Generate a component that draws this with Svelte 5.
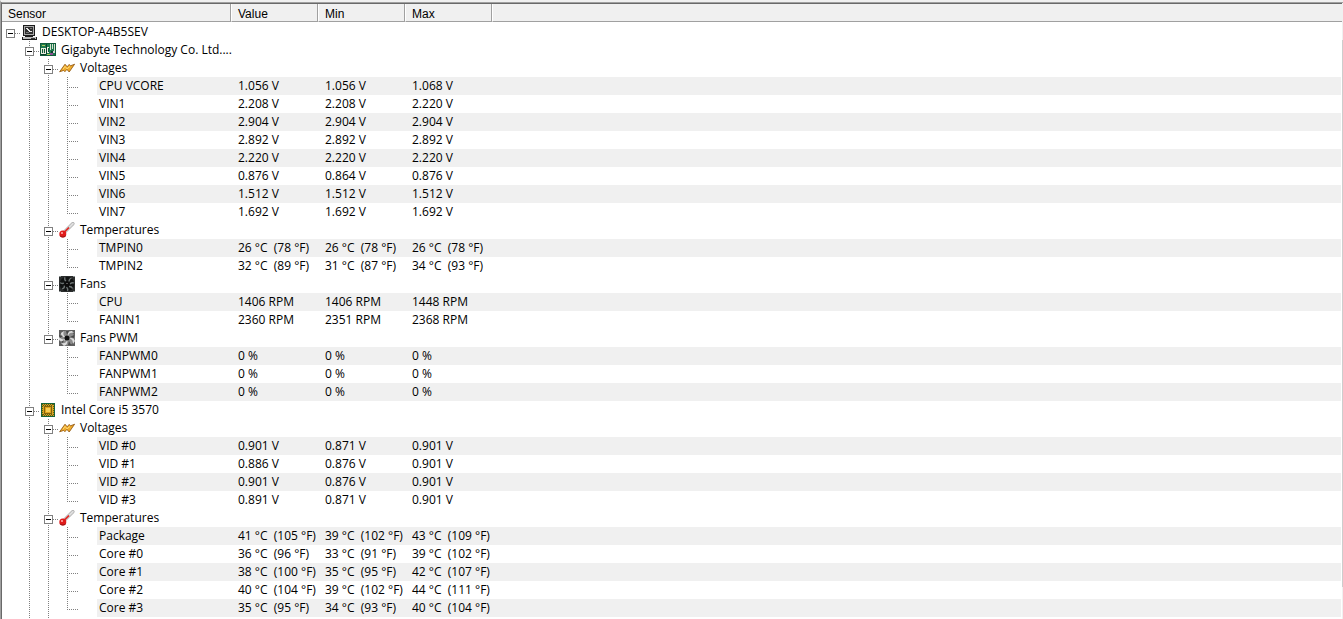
<script lang="ts">
  type Kind = "pc" | "board" | "chip" | "volt" | "temp" | "fan" | "pwm";
  type Reading = [name: string, value: string, min: string, max: string];
  type Group = { name: string; icon: Kind; readings: Reading[] };
  type Device = { name: string; icon: Kind; more: boolean; groups: Group[] };

  const columns = ["Value", "Min", "Max"];
  const host = "DESKTOP-A4B5SEV";

  // more: further groups follow below the visible part
  const devices: Device[] = [
    {
      name: "Gigabyte Technology Co. Ltd....",
      icon: "board",
      more: false,
      groups: [
        {
          name: "Voltages",
          icon: "volt",
          readings: [
            ["CPU VCORE", "1.056 V", "1.056 V", "1.068 V"],
            ["VIN1", "2.208 V", "2.208 V", "2.220 V"],
            ["VIN2", "2.904 V", "2.904 V", "2.904 V"],
            ["VIN3", "2.892 V", "2.892 V", "2.892 V"],
            ["VIN4", "2.220 V", "2.220 V", "2.220 V"],
            ["VIN5", "0.876 V", "0.864 V", "0.876 V"],
            ["VIN6", "1.512 V", "1.512 V", "1.512 V"],
            ["VIN7", "1.692 V", "1.692 V", "1.692 V"],
          ],
        },
        {
          name: "Temperatures",
          icon: "temp",
          readings: [
            ["TMPIN0", "26 °C  (78 °F)", "26 °C  (78 °F)", "26 °C  (78 °F)"],
            ["TMPIN2", "32 °C  (89 °F)", "31 °C  (87 °F)", "34 °C  (93 °F)"],
          ],
        },
        {
          name: "Fans",
          icon: "fan",
          readings: [
            ["CPU", "1406 RPM", "1406 RPM", "1448 RPM"],
            ["FANIN1", "2360 RPM", "2351 RPM", "2368 RPM"],
          ],
        },
        {
          name: "Fans PWM",
          icon: "pwm",
          readings: [
            ["FANPWM0", "0 %", "0 %", "0 %"],
            ["FANPWM1", "0 %", "0 %", "0 %"],
            ["FANPWM2", "0 %", "0 %", "0 %"],
          ],
        },
      ],
    },
    {
      name: "Intel Core i5 3570",
      icon: "chip",
      more: true,
      groups: [
        {
          name: "Voltages",
          icon: "volt",
          readings: [
            ["VID #0", "0.901 V", "0.871 V", "0.901 V"],
            ["VID #1", "0.886 V", "0.876 V", "0.901 V"],
            ["VID #2", "0.901 V", "0.876 V", "0.901 V"],
            ["VID #3", "0.891 V", "0.871 V", "0.901 V"],
          ],
        },
        {
          name: "Temperatures",
          icon: "temp",
          readings: [
            ["Package", "41 °C  (105 °F)", "39 °C  (102 °F)", "43 °C  (109 °F)"],
            ["Core #0", "36 °C  (96 °F)", "33 °C  (91 °F)", "39 °C  (102 °F)"],
            ["Core #1", "38 °C  (100 °F)", "35 °C  (95 °F)", "42 °C  (107 °F)"],
            ["Core #2", "40 °C  (104 °F)", "39 °C  (102 °F)", "44 °C  (111 °F)"],
            ["Core #3", "35 °C  (95 °F)", "34 °C  (93 °F)", "40 °C  (104 °F)"],
          ],
        },
      ],
    },
  ];

  let closed = $state<Record<string, boolean>>({});

  function flip(id: string) {
    closed[id] = !closed[id];
  }
</script>

{#snippet icon(kind: Kind)}
  <svg class="icon" viewBox="0 0 16 16" aria-hidden="true">
    {#if kind === "pc"}
      <path fill="#1c1c1c" d="M2 1h12v11H2z" />
      <path fill="#a9a9a9" d="M3 2h10v9H3z" />
      <path fill="#303030" d="M4 3h8v7H4z" />
      <path fill="#e8e8e8" d="M5 4h2v1H5zM6 5h2v1H6zM7 6h2v1H7zM8 7h3v1H8z" />
      <path fill="#777" d="M9 4h2v1H9zM5 8h3v1H5z" />
      <path fill="#1c1c1c" d="M4 12h8v1H4zM1 13h15v3H1z" />
      <path fill="#bcbcbc" d="M2 13h13v2H2z" />
      <path fill="#333" d="M10 14h4v1h-4z" />
    {:else if kind === "board"}
      <path fill="#115b3a" d="M0 1h16v13H0z" />
      <path fill="#1d7a4e" d="M1 2h14v11H1z" />
      <path fill="#0b3f2b" d="M6 2h1v10H6zM1 12h5v1H1zM11 9h4v2h-4z" />
      <path fill="#eceee0" d="M1 6h5v6H1zM7 5h2v6H7z" />
      <path fill="#115b3a" d="M2 7h3v4H2zM8 6h1v4H8z" />
      <path fill="#d8dfcf" d="M3 7h1v4H3zM10 2h1v6h-1zM12 2h1v5h-1zM14 2h1v7h-1z" />
      <path fill="#aeca5c" d="M2 3h3v1H2zM7 12h3v1H7z" />
      <path fill="#8b4c92" d="M10 11h3v2h-3z" />
      <path fill="#d8d8d8" d="M13 9h2v2h-2z" />
    {:else if kind === "chip"}
      <path fill="#17653b" d="M1 1h14v14H1z" />
      <path fill="#d9a520" d="M2 2h12v12H2z" />
      <path
        stroke="#5f5c16"
        stroke-dasharray="1 1"
        fill="none"
        d="M2 2.5h12M2 13.5h12M2.5 2v12M13.5 2v12M3 3.5h10M3 12.5h10"
      />
      <path fill="#83640e" d="M4 4h8v8H4z" />
      <path fill="#e0a31c" d="M5 5h6v6H5z" />
      <path fill="#f8cf55" d="M6 6h4v4H6z" />
    {:else if kind === "volt"}
      <path
        fill="#f0a928"
        stroke="#8a520f"
        stroke-width="0.8"
        stroke-linejoin="round"
        d="M.6 11.8 6 4.2l2.2 2.6 2-2.4 1.3 1.4 4.1-1.6-5.4 7.8-2.3-2.6-2 2.3-1.2-1.3z"
      />
      <path fill="none" stroke="#ffdd78" d="M4 9.4l2-3 2.2 2.6 2-2.4 1.1 1.1" />
    {:else if kind === "temp"}
      <path stroke="#a4a4a4" stroke-width="3.4" stroke-linecap="round" d="M6 9.5l7.8-7.8" />
      <path stroke="#dedede" stroke-width="2.2" stroke-linecap="round" d="M6 9.5l7.8-7.8" />
      <path stroke="#e5201d" stroke-width="1.6" d="M4 11.5l6-6" />
      <circle cx="3.8" cy="12" r="3.5" fill="#e01b1b" />
      <path fill="#8e1515" d="M.6 13.2a3.5 3.5 0 0 0 6.5 0A5 5 0 0 1 .6 13.2z" />
      <circle cx="3" cy="11" r="1" fill="#ffb5b0" />
    {:else if kind === "fan"}
      <path fill="#2b2d2d" d="M0 0h16v16H0z" />
      <circle cx="8" cy="8" r="7.3" fill="#101212" />
      <g fill="none" stroke="#6d7474" stroke-width="1.3">
        <path d="M7 5C5.5 4 5.500 2.500 6 1.200" />
        <path d="M10 5.500c0-2 1-3 2.500-3.500" />
        <path d="M11 8c1.500-1.500 2.600-1.500 4-1" />
        <path d="M10 10.500c2-.2 3 .7 3.600 2" />
        <path d="M7.500 11c1.400 1.300 1.400 2.600 1 4" />
        <path d="M5.500 9.500c.2 2-.8 3-2.500 3.500" />
        <path d="M5 7C3.500 8 2.300 7.500 1 6.800" />
      </g>
      <circle cx="8" cy="8" r="2.6" fill="#0b0b0b" />
      <path fill="#8b9292" d="M0 0h2v1H0zM14 0h2v1h-2zM0 15h2v1H0zM14 15h2v1h-2z" />
      <path fill="#555" d="M7 7h2v1H7z" />
    {:else}
      <path fill="#5f5f5f" d="M0 0h16v16H0z" />
      <circle cx="8" cy="8" r="7.6" fill="#8b8b8b" />
      <path
        fill="#dcdcdc"
        d="M7 7C4 6 4 3 5 1L2 3c0 3 2 5 5 4zM9 7c0-4 3-5 6-4l-2-2C10 1 8 3 9 7zM9 9c4-1 5 2 5 5l2-3c-1-3-4-4-7-2zM8 9c0 4-3 5-6 4l3 3c3-1 4-4 3-7zM7 9c-3 1-5 0-7-2v3c2 2 5 2 7-1z"
      />
      <path fill="#484848" d="M7 1h3L8 5zM15 5v3l-4-1zM12 15H9l1-4zM0 5l4 1-3 2zM2 12l3-2-1 3z" />
      <circle cx="8" cy="8" r="2.5" fill="#101010" />
    {/if}
  </svg>
{/snippet}

{#snippet node(level: number, name: string, kind: Kind, id: string, up: boolean, down: boolean, rail: boolean)}
  <tr>
    <th scope="row" colspan="5">
      <div class="cell">
        {#each { length: level } as _, i}
          <span class="slot" class:rail={i === 1 && rail}></span>
        {/each}
        <span class="slot branch" class:up class:down>
          <button
            class="toggle"
            class:closed={closed[id]}
            aria-label="Toggle {name}"
            aria-expanded={!closed[id]}
            onclick={() => flip(id)}
          ></button>
        </span>
        <span class="slot pic">{@render icon(kind)}</span>
        <span class="label">{name}</span>
      </div>
    </th>
  </tr>
{/snippet}

<main>
  <div class="list">
    <table>
      <thead>
        <tr>
          <th scope="col" class="sensor">Sensor</th>
          {#each columns as column}
            <th scope="col" class="reading">{column}</th>
          {/each}
          <td class="rest"></td>
        </tr>
      </thead>
      <tbody>
        {@render node(0, host, "pc", "host", false, false, false)}
        {#if !closed.host}
          {#each devices as device, d}
            {@render node(1, device.name, device.icon, `${d}`, true, true, false)}
            {#if !closed[d]}
              {#each device.groups as group, g}
                {@const last = g === device.groups.length - 1 && !device.more}
                {@render node(2, group.name, group.icon, `${d}-${g}`, true, !last, true)}
                {#if !closed[`${d}-${g}`]}
                  {#each group.readings as [name, ...values], r}
                    <tr class:shaded={r % 2 === 0}>
                      <th scope="row">
                        <div class="cell">
                          <span class="slot"></span>
                          <span class="slot rail"></span>
                          <span class="slot" class:rail={!last}></span>
                          <span class="slot branch leaf up" class:down={r < group.readings.length - 1}></span>
                          <span class="slot"></span>
                          <span class="label">{name}</span>
                        </div>
                      </th>
                      {#each values as value}
                        <td>{value}</td>
                      {/each}
                      <td class="end"></td>
                    </tr>
                  {/each}
                {/if}
              {/each}
            {/if}
          {/each}
          <tr aria-hidden="true">
            <td class="tail" colspan="5">
              <div class="cell">
                <span class="slot"></span>
                <span class="slot rail"></span>
                <span class="slot rail"></span>
              </div>
            </td>
          </tr>
        {/if}
      </tbody>
    </table>
  </div>
  <div class="scrollbar"><div class="thumb"></div></div>
</main>

<style>
  :global(body) {
    background: #fff;
  }

  main {
    box-sizing: border-box;
    display: flex;
    height: 100vh;
    overflow: hidden;
    border-top: 2px solid #f0f0f0;
    border-left: 1px solid #a0a0a0;
    color: #000;
    font-family: "Open Sans", "Noto Sans", sans-serif;
    font-size: 12px;
    line-height: 18px;
  }

  .list {
    flex: 1;
    min-width: 0;
    border-top: 1px solid #a0a0a0;
    border-left: 1px solid #696969;
  }

  table {
    width: 100%;
    table-layout: fixed;
    border-collapse: separate;
    border-spacing: 0;
    border-top: 1px solid #696969;
  }

  th,
  td {
    height: 18px;
    padding: 0;
    text-align: left;
    font-weight: 400;
    white-space: pre;
  }

  thead th,
  .rest {
    box-sizing: border-box;
    padding: 3px 6px 0;
    height: 18px;
    background: #f0f0f0;
    border-right: 1px solid #a0a0a0;
    border-bottom: 1px solid #a0a0a0;
    font-family: "Liberation Sans", Arial, sans-serif;
    line-height: 14px;
  }

  thead th + th,
  .rest {
    border-left: 1px solid #fff;
  }

  .rest {
    border-right: none;
  }

  .sensor {
    width: 229px;
  }

  .reading {
    width: 87px;
  }

  tbody::before {
    content: "";
    display: block;
    height: 1px;
  }

  tbody td {
    padding-left: 7px;
  }

  tbody .tail {
    padding: 0;
  }

  .shaded td,
  .shaded .label {
    background: #f0f0f0;
  }

  .end {
    border-right: 1px solid #fff;
  }

  .cell {
    display: flex;
    height: 18px;
  }

  .slot {
    flex: none;
    width: 19px;
    height: 18px;
  }

  .label {
    flex: 1;
    min-width: 0;
    padding-left: 2px;
  }

  /* dotted tree lines, one pixel on and one off */
  .rail,
  .up {
    background: repeating-linear-gradient(#808080 0 1px, transparent 1px 2px) 8px 0 / 1px 11px no-repeat;
  }

  .rail,
  .up.down {
    background-size: 1px 18px;
  }

  .branch {
    display: flex;
    align-items: center;
  }

  .branch::after {
    content: "";
    flex: 1;
    height: 1px;
    margin-top: 3px;
    background: repeating-linear-gradient(to right, #808080 0 1px, transparent 1px 2px);
  }

  .leaf::after {
    margin-left: 8px;
  }

  .toggle {
    box-sizing: border-box;
    width: 9px;
    height: 9px;
    margin: 3px 0 0 4px;
    padding: 0;
    border: 1px solid #808080;
    border-radius: 0;
    background: linear-gradient(#000, #000) center / 5px 1px no-repeat #fff;
  }

  .toggle.closed {
    background:
      linear-gradient(#000, #000) center / 5px 1px no-repeat,
      linear-gradient(#000, #000) center / 1px 5px no-repeat #fff;
  }

  .pic {
    display: flex;
    align-items: center;
  }

  .icon {
    width: 16px;
    height: 16px;
  }

  .scrollbar {
    box-sizing: border-box;
    width: 1px;
    padding: 37px 0 32px;
    border-top: 1px solid #a0a0a0;
    background: #f0f0f0;
  }

  .thumb {
    height: 100%;
    background: #cdcdcd;
  }
</style>
